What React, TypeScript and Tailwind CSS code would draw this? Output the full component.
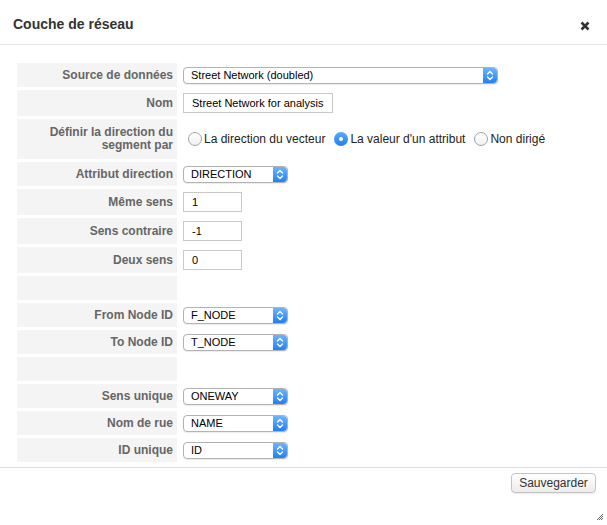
import type { ReactNode } from 'react';

const font = { fontFamily: '"Liberation Sans", Arial, Helvetica, sans-serif' };

function Stepper() {
  return (
    <div className="flex h-full w-[14px] shrink-0 items-center justify-center rounded-r-[4px] bg-gradient-to-b from-[#6db5fb] to-[#1f7ff0]">
      <svg width="8" height="11" viewBox="0 0 8 11" fill="none">
        <path d="M1.5 4 L4 1.5 L6.5 4" stroke="white" strokeWidth="1.3" strokeLinecap="round" strokeLinejoin="round" />
        <path d="M1.5 7 L4 9.5 L6.5 7" stroke="white" strokeWidth="1.3" strokeLinecap="round" strokeLinejoin="round" />
      </svg>
    </div>
  );
}

function Select({ value, width }: { value: string; width: string }) {
  return (
    <div className={`flex h-[17px] items-stretch rounded-[4px] border border-[#b3b3b3] bg-white shadow-[0_1px_1px_rgba(0,0,0,0.08)] ${width}`}>
      <div className="flex-1 truncate pl-[7px] text-[11px] leading-[15px] text-black">{value}</div>
      <Stepper />
    </div>
  );
}

function TextInput({ value, width }: { value: string; width: string }) {
  return (
    <div className={`flex h-[20px] items-center border border-[#c9c9c9] bg-white pl-[8px] text-[11px] text-black ${width}`}>
      {value}
    </div>
  );
}

function Radio({ checked, label }: { checked?: boolean; label: string }) {
  return (
    <div className="flex items-center gap-[2px]">
      {checked ? (
        <span className="flex h-[14px] w-[14px] items-center justify-center rounded-full bg-gradient-to-b from-[#5aaafc] to-[#1f7ff0]">
          <span className="h-[4px] w-[4px] rounded-full bg-white" />
        </span>
      ) : (
        <span className="h-[14px] w-[14px] rounded-full border border-[#a3a3a3] bg-gradient-to-b from-white to-[#f1f1f1]" />
      )}
      <span className="text-[12px] text-[#222]">{label}</span>
    </div>
  );
}

function Row({ label, h = 'h-[24px]', children }: { label?: ReactNode; h?: string; children?: ReactNode }) {
  return (
    <div className={`flex ${h}`}>
      <div className="flex w-[160px] shrink-0 items-center justify-end bg-[#f4f4f4] pr-[4px] text-right text-[12px] font-bold leading-[13px] text-[#666]">
        {label}
      </div>
      <div className="flex items-center pl-[6px]">{children}</div>
    </div>
  );
}

export default function App() {
  return (
    <div className="relative h-[525px] w-[607px] bg-white" style={font}>
      <div className="flex h-[45px] items-center justify-between border-b border-[#e5e5e5] pl-[13px] pr-[17px] pt-[4px]">
        <h1 className="text-[14px] font-bold text-[#333]">Couche de réseau</h1>
        <svg width="10" height="10" viewBox="0 0 10 10" className="mt-[4px]">
          <path d="M1.5 1.5 L8.5 8.5 M8.5 1.5 L1.5 8.5" stroke="#333" strokeWidth="2.6" />
        </svg>
      </div>

      <div className="flex flex-col gap-[3px] pb-[5px] pl-[17px] pt-[18px]">
        <Row label="Source de données">
          <Select value="Street Network (doubled)" width="w-[315px]" />
        </Row>
        <Row label="Nom" h="h-[26px]">
          <TextInput value="Street Network for analysis" width="w-[150px]" />
        </Row>
        <Row
          h="h-[40px]"
          label={
            <span>
              Définir la direction du
              <br />
              segment par
            </span>
          }
        >
          <div className="flex items-center gap-[9px] pl-[5px]">
            <Radio label="La direction du vecteur" />
            <Radio checked label="La valeur d'un attribut" />
            <Radio label="Non dirigé" />
          </div>
        </Row>
        <Row label="Attribut direction">
          <Select value="DIRECTION" width="w-[105px]" />
        </Row>
        <Row label="Même sens" h="h-[26px]">
          <TextInput value="1" width="w-[59px]" />
        </Row>
        <Row label="Sens contraire" h="h-[26px]">
          <TextInput value="-1" width="w-[59px]" />
        </Row>
        <Row label="Deux sens" h="h-[26px]">
          <TextInput value="0" width="w-[59px]" />
        </Row>
        <Row />
        <Row label="From Node ID">
          <Select value="F_NODE" width="w-[105px]" />
        </Row>
        <Row label="To Node ID">
          <Select value="T_NODE" width="w-[105px]" />
        </Row>
        <Row />
        <Row label="Sens unique">
          <Select value="ONEWAY" width="w-[105px]" />
        </Row>
        <Row label="Nom de rue">
          <Select value="NAME" width="w-[105px]" />
        </Row>
        <Row label="ID unique">
          <Select value="ID" width="w-[105px]" />
        </Row>
      </div>

      <div className="flex justify-end border-t border-[#dedede] pr-[11px] pt-[5px]">
        <button className="h-[20px] w-[85px] rounded-[4px] border border-[#c4c4c4] bg-gradient-to-b from-white to-[#ececec] text-[12px] text-[#333] shadow-[0_1px_1px_rgba(0,0,0,0.08)]">
          Sauvegarder
        </button>
      </div>

      <svg width="8" height="8" viewBox="0 0 8 8" className="absolute bottom-[4px] right-[3px]">
        <path d="M7 1 L1 7 M7 3 L3 7 M7 5 L5 7" stroke="#555" strokeWidth="0.9" />
      </svg>
    </div>
  );
}
